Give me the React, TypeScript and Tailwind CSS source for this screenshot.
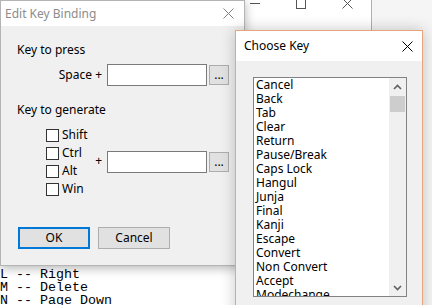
const ui = { fontFamily: '"Noto Sans", "Open Sans", sans-serif' };
const mono = { fontFamily: '"Liberation Mono", "Courier New", monospace' };

const keys = [
  'Cancel', 'Back', 'Tab', 'Clear', 'Return', 'Pause/Break', 'Caps Lock', 'Hangul',
  'Junja', 'Final', 'Kanji', 'Escape', 'Convert', 'Non Convert', 'Accept', 'Modechange',
];

function CloseGlyph({ color }: { color: string }) {
  return (
    <svg width="11" height="11" viewBox="0 0 11 11">
      <path d="M0.5 0.5 L10.5 10.5 M10.5 0.5 L0.5 10.5" stroke={color} strokeWidth="1" fill="none" />
    </svg>
  );
}

function Chevron({ up }: { up?: boolean }) {
  return (
    <svg width="9" height="6" viewBox="0 0 9 6">
      <path d={up ? 'M1 5 L4.5 1.5 L8 5' : 'M1 1 L4.5 4.5 L8 1'} stroke="#606060" strokeWidth="1.6" fill="none" />
    </svg>
  );
}

function Checkbox({ label }: { label: string }) {
  return (
    <div className="flex items-center h-[18px] gap-[3px]">
      <div className="w-[13px] h-[13px] border border-[#333333] bg-white" />
      <span>{label}</span>
    </div>
  );
}

function KeyField() {
  return (
    <div className="flex items-center">
      <div className="w-[100px] h-[22px] border border-[#7a7a7a] bg-white" />
      <button className="ml-[2px] w-[20px] h-[20px] bg-[#e1e1e1] border border-[#adadad] flex items-end justify-center pb-[3px] leading-none text-[12px]">
        ...
      </button>
    </div>
  );
}

export default function App() {
  return (
    <div className="relative w-[432px] h-[305px] overflow-hidden bg-[#f5f5f5] text-black" style={ui}>
      {/* console window behind */}
      <div className="absolute left-0 top-[-14px] w-[372px] h-[334px] bg-white border-r border-[#b0b0b0] flex flex-col">
        <div className="h-[35px] bg-white flex items-center justify-end shrink-0">
          <div className="w-[46px] flex justify-center">
            <div className="w-[10px] h-px bg-[#555555]" />
          </div>
          <div className="w-[46px] flex justify-center">
            <div className="w-[10px] h-[10px] border border-[#555555]" />
          </div>
          <div className="w-[46px] mr-[1px] flex justify-center">
            <CloseGlyph color="#555555" />
          </div>
        </div>
        <div className="flex-1 bg-white pt-[247px] text-[13.33px] leading-[13px] whitespace-pre" style={mono}>
          <div>L -- Right</div>
          <div>M -- Delete</div>
          <div>N -- Page Down</div>
        </div>
      </div>

      {/* Edit Key Binding dialog */}
      <div className="absolute left-0 top-0 w-[245px] h-[266px] border border-[#b4b4b4] flex flex-col shadow-[0_2px_10px_rgba(0,0,0,0.3)] text-[12px]">
        <div className="h-[25px] bg-white flex items-center justify-between pl-[4px] pr-[10px] shrink-0">
          <span className="text-[#8c8c8c]">Edit Key Binding</span>
          <CloseGlyph color="#808080" />
        </div>
        <div className="flex-1 bg-[#f0f0f0] pl-[16px] flex flex-col">
          <div className="mt-[16px] leading-[16px]">Key to press</div>
          <div className="mt-[6px] flex items-center">
            <div className="w-[85px] mr-[5px] text-right">Space +</div>
            <KeyField />
          </div>
          <div className="mt-[16px] leading-[16px]">Key to generate</div>
          <div className="mt-[8px] flex items-center">
            <div className="w-[85px] mr-[5px] flex items-center">
              <div className="pl-[29px] flex flex-col">
                <Checkbox label="Shift" />
                <Checkbox label="Ctrl" />
                <Checkbox label="Alt" />
                <Checkbox label="Win" />
              </div>
              <div className="flex-1" />
              <span className="mt-[-2px]">+</span>
            </div>
            <KeyField />
          </div>
          <div className="mt-[29px] ml-[1px] flex gap-[8px]">
            <button className="w-[72px] h-[22px] bg-[#e1e1e1] border-2 border-[#0078d7] flex items-center justify-center">
              OK
            </button>
            <button className="w-[72px] h-[22px] bg-[#e1e1e1] border border-[#adadad] flex items-center justify-center">
              Cancel
            </button>
          </div>
        </div>
      </div>

      {/* Choose Key dialog */}
      <div className="absolute left-[235px] top-[30px] w-[188px] h-[290px] border border-[#e8a47c] bg-[#f0f0f0] flex flex-col shadow-[0_0_14px_rgba(0,0,0,0.22)] text-[12px]">
        <div className="h-[30px] bg-white flex items-center justify-between pl-[8px] pr-[9px] shrink-0">
          <span>Choose Key</span>
          <CloseGlyph color="#000000" />
        </div>
        <div className="pl-[17px] pt-[16px]">
          <div className="w-[154px] h-[220px] border border-[#828282] bg-white flex">
            <div className="flex-1 overflow-hidden pl-[2px]">
              {keys.map(k => (
                <div key={k} className="h-[14px] leading-[14px] whitespace-nowrap">{k}</div>
              ))}
            </div>
            <div className="w-[17px] bg-[#f0f0f0] flex flex-col">
              <div className="h-[17px] flex items-center justify-center">
                <Chevron up />
              </div>
              <div className="mt-[1px] mx-px h-[16px] bg-[#cdcdcd]" />
              <div className="flex-1" />
              <div className="h-[17px] flex items-center justify-center">
                <Chevron />
              </div>
            </div>
          </div>
        </div>
      </div>
    </div>
  );
}
